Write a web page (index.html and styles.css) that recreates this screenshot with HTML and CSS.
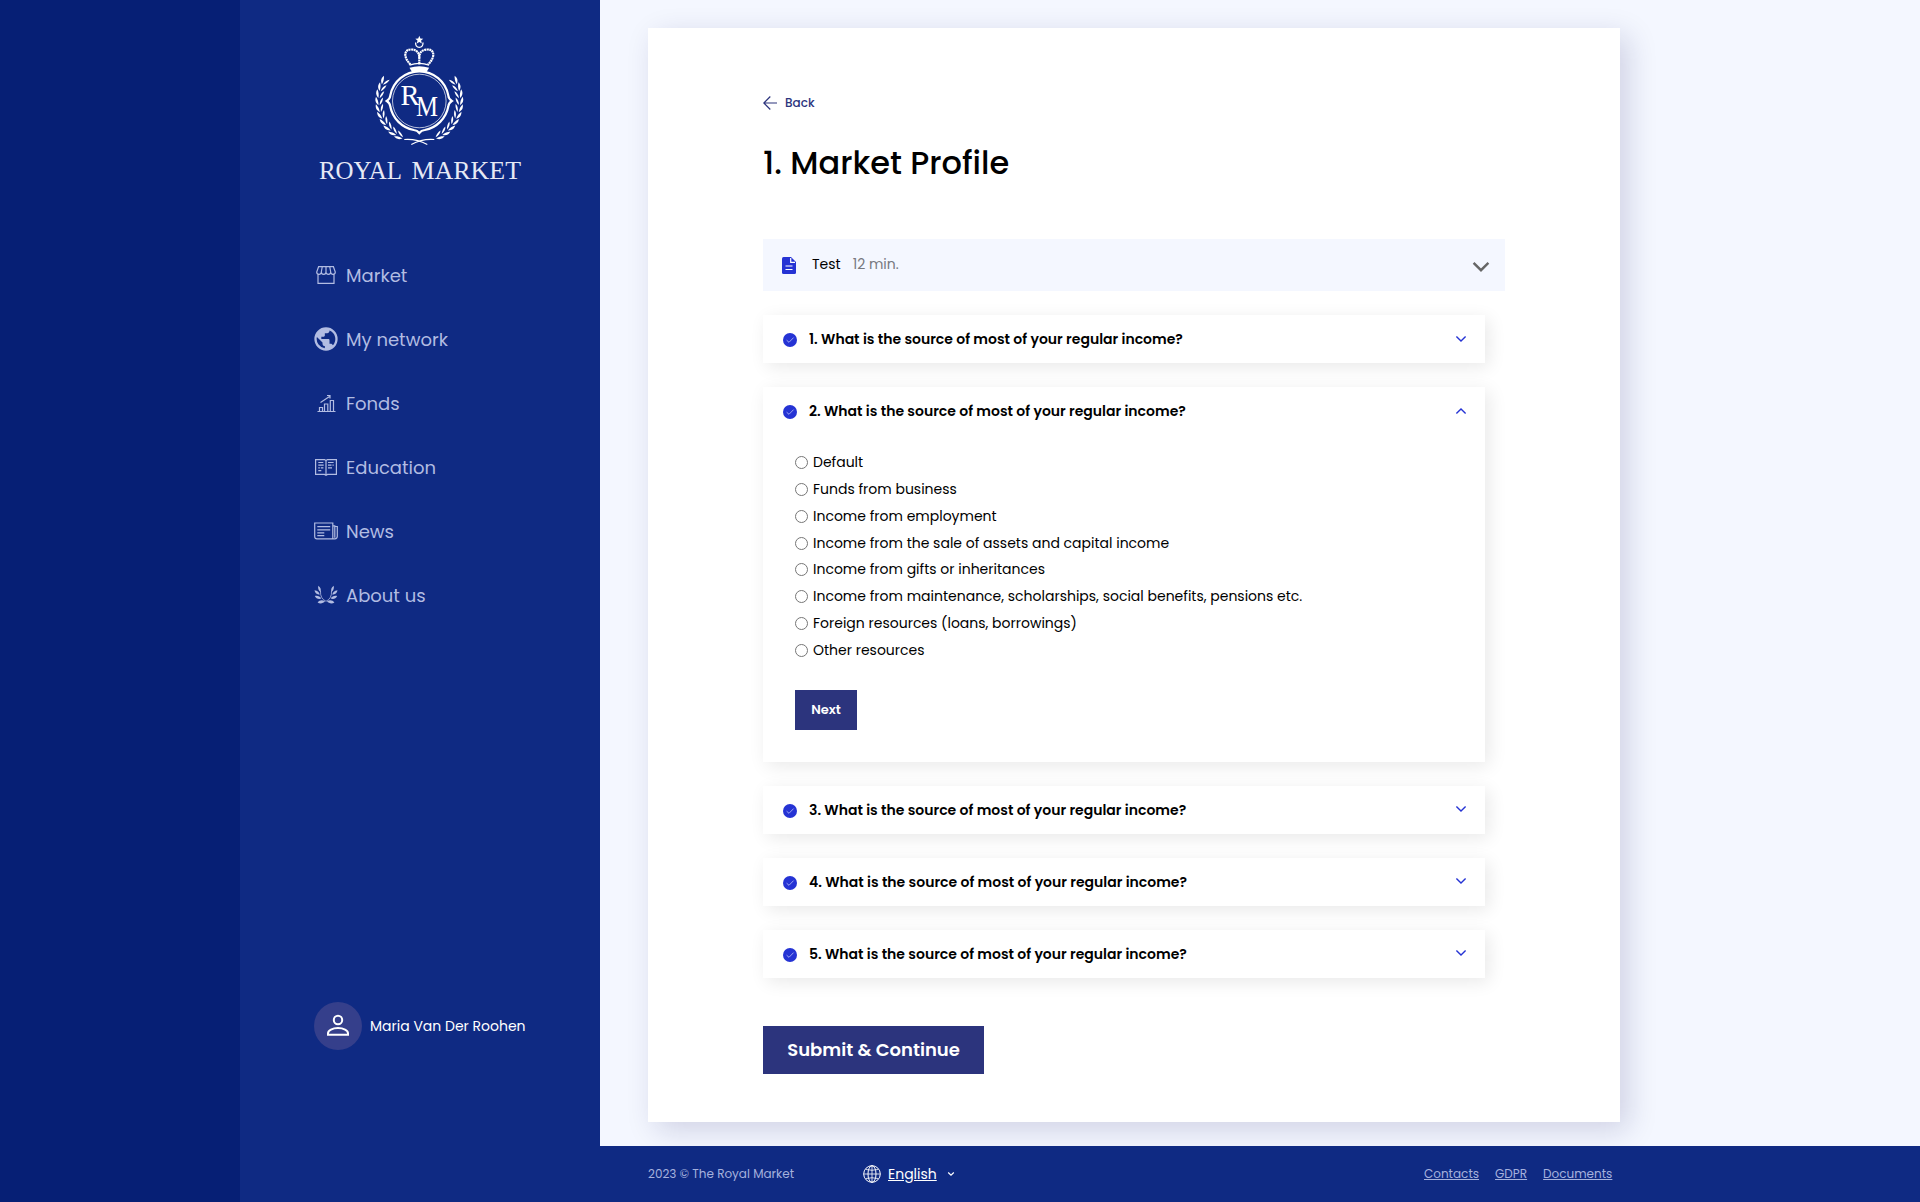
FILE: index.html
```html
<!DOCTYPE html>
<html lang="en">
<head>
<meta charset="utf-8">
<title>Royal Market</title>
<link rel="stylesheet" href="styles.css">
</head>
<body>
<svg class="sprite" width="0" height="0" aria-hidden="true">
  <symbol id="check" viewBox="0 0 14 14"><circle cx="7" cy="7" r="7" fill="#2533d4"/><path d="M3.600 7.200 6 9.300 10.600 4.600" fill="none" stroke="#aab0f5" stroke-width=".9"/></symbol>
  <symbol id="chevron" viewBox="0 0 12 8"><path d="M1.400 1.600 6 6.100l4.600-4.500" fill="none" stroke="currentColor" stroke-width="1.400"/></symbol>
</svg>
<div class="page">
  <div class="edge"></div>
  <aside class="sidebar">
    <svg class="logo" width="240" height="170" viewBox="300 20 240 170" fill="#fff">
      <defs>
        <g id="pair"><path d="M-41 2C-44.500-1-44.200-4-43-6.500-41.500-4-40.600-1-41 2z"/><path d="M-39.800 2C-39.600-1.500-38.500-4-36-5.500-36.300-2.500-37.500 0-39.800 2z"/></g>
        <g id="branch">
          <use href="#pair" transform="rotate(27)"/><use href="#pair" transform="rotate(17)"/><use href="#pair" transform="rotate(7)"/><use href="#pair" transform="rotate(-3)"/><use href="#pair" transform="rotate(-13)"/><use href="#pair" transform="rotate(-23)"/><use href="#pair" transform="rotate(-33)"/><use href="#pair" transform="rotate(-43)"/><use href="#pair" transform="rotate(-53)"/><use href="#pair" transform="rotate(-63)"/>
          <path d="M-15 38.500Q-3 37.500 8 43.500" fill="none" stroke="#fff" stroke-width="1.200"/>
        </g>
      </defs>
      <path d="m419.300 35.800 1.100 2.700 2.900.2-2.200 1.900.7 2.800-2.500-1.500-2.500 1.500.7-2.800-2.200-1.900 2.900-.2z"/>
      <path d="M415.800 42.500a3.700 3.700 0 1 0 7 0" fill="none" stroke="#fff" stroke-width="1.300"/>
      <g fill="none" stroke="#fff" stroke-width="2.200" stroke-dasharray="2 .5"><path d="M410.500 64.500C403 57 404 49.500 411 49.500c5 0 8.300 2.500 8.300 8 0-5.500 3.300-8 8.300-8 7 0 8 7.500.5 15"/><path d="M419.300 57v8"/></g>
      <path d="M409.500 65.200q9.800-3.500 19.600 0" fill="none" stroke="#fff" stroke-width="1.300"/>
      <path d="M409.500 67.800q9.800-3 19.600 0l-2.500 4.200h-14.600z"/>
      <g transform="translate(419.300 101)">
        <use href="#branch"/><use href="#branch" transform="scale(-1 1)"/>
        <g fill="none" stroke="#fff">
          <path stroke-width="2.200" d="M-29-5.500A29.500 29.500 0 0 1 29-5.500Q29.300-2 32.500 0 29.300 2 29 5.500A29.500 29.500 0 0 1 5.500 29Q2 29.300 0 32-2 29.300-5.500 29A29.500 29.500 0 0 1-29 5.500Q-29.300 2-32.500 0-29.300-2-29-5.500z"/>
          <circle r="26.800" stroke-width=".7"/>
        </g>
      </g>
      <text class="mono" x="400.500" y="105" textLength="19" lengthAdjust="spacingAndGlyphs">R</text><text class="mono" x="416" y="116" textLength="22" lengthAdjust="spacingAndGlyphs">M</text>
      <text class="brand" x="319" y="178.500" textLength="83" lengthAdjust="spacingAndGlyphs">ROYAL</text>
      <text class="brand" x="411.500" y="178.500" textLength="109.500" lengthAdjust="spacingAndGlyphs">MARKET</text>
    </svg>
    <nav class="nav">
      <a class="nav-item"><svg width="24" height="24" viewBox="0 0 24 24" fill="none" stroke="currentColor" stroke-width="1.200"><path d="M4 11v9.400h16V11M4.600 3.700h14.800L21.300 9c0 3-4.600 3.200-4.600 0 0 3.200-4.700 3.200-4.700 0 0 3.200-4.700 3.200-4.700 0 0 3.200-4.600 3-4.600 0zM7.300 9l.9-5M12 9V4M16.700 9l-.9-5"/></svg>Market</a>
      <a class="nav-item"><svg width="24" height="24" viewBox="1.700 1.700 20.600 20.600" fill="currentColor"><path fill-rule="evenodd" d="M12 2a10 10 0 1 0 0 20 10 10 0 0 0 0-20zm3 2.600V5c0 1.100-.9 2-2 2h-2v2c0 .55-.45 1-1 1H8v2h6c.55 0 1 .45 1 1v3h1c.9 0 1.640.58 1.900 1.390A8 8 0 0 0 15 4.600zM4.210 10.210A8 8 0 0 0 11 19.930V18c-1.100 0-2-.9-2-2v-1z"/></svg>My network</a>
      <a class="nav-item"><svg width="24" height="24" viewBox="0 0 24 24" fill="none" stroke="currentColor" stroke-width="1.200"><path d="M3.500 20.500h18M5.500 20v-3.500h3V20M10.500 20v-7h3.300v7M16.300 20V9.500h3.200V20M6.500 11.500l9-6M13 4.500h3v3"/></svg>Fonds</a>
      <a class="nav-item"><svg width="24" height="24" viewBox="0 0 24 24" fill="none" stroke="currentColor" stroke-width="1.200"><path d="M1.600 4.600h8.900l1.500 1 1.500-1h8.900v14.800h-8.900l-1.500 1-1.500-1H1.600zM12 5.500v14M4.300 7.500h5M4.300 10.200h5.400M4.300 12.900h1.500m1 0h2.600M4.300 15.700h3M14 7.500h5.600M14 10.200h3.500m1 0h1.200M14 12.900h4"/></svg>Education</a>
      <a class="nav-item"><svg width="24" height="24" viewBox="0 0 24 24" fill="none" stroke="currentColor" stroke-width="1.200"><path d="M.7 4h18.100v15.800H3q-2.300 0-2.300-2.300zM18.800 6.800h2v12M21 7.500h2.300v9.800q0 2.500-2.500 2.500h-2M3.300 7.700h12.900M3.300 10.800h12.900M3.300 13.800h7M3.300 16.600h7"/></svg>News</a>
      <a class="nav-item"><svg width="24" height="24" viewBox="0 0 24 24" fill="currentColor"><defs><g id="wing"><path d="M4.300 2.700c2.600 2 3 4 2.200 6.300C4.500 7.500 3.700 5 4.300 2.700zM.5 7.200c3.200.5 4.800 2 5.200 4.600C2.900 11.500.8 9.700.5 7.200zM.8 13c2.800-.6 5 .2 6.600 2.600C4.500 16.700 2 15.500.8 13zM3.600 19.500c1.800-2.400 4.600-2.900 7.400-1.200-1.800 2.200-5 2.800-7.400 1.200z"/><path d="M6.500 8q-.5 7.500 5.500 10.300" fill="none" stroke="currentColor" stroke-width=".8"/></g></defs><use href="#wing"/><use href="#wing" transform="matrix(-1 0 0 1 24 0)"/></svg>About us</a>
    </nav>
    <div class="user">
      <span class="avatar"><svg width="24" height="24" viewBox="0 0 24 24" fill="none" stroke="#fff" stroke-width="2"><circle cx="12" cy="6" r="4.200"/><path d="M2 20.800v-1.500C2 16.500 6.500 14 12 14s10 2.500 10 5.300v1.500z"/></svg></span>
      <span class="user-name">Maria Van Der Roohen</span>
    </div>
  </aside>
  <div class="main">
    <main class="sheet">
      <a class="back"><svg width="14" height="14" viewBox="0 0 14 14" fill="none" stroke="currentColor" stroke-width="1.200"><path d="M14 7H.8M7.300.5.8 7l6.500 6.500"/></svg><span>Back</span></a>
      <h1 class="title">1. Market Profile</h1>
      <div class="test">
        <svg width="14" height="17" viewBox="0 0 14 17"><path d="M1.500 0H9l5 5v10.500q0 1.500-1.500 1.500h-11Q0 17 0 15.500v-14Q0 0 1.500 0z" fill="#2533d4"/><path d="M8.700 1v4.300H13M3.500 9h7M3.500 12.500h7" fill="none" stroke="#fff" stroke-width="1.200"/></svg>
        <span class="test-name">Test</span><span class="test-time">12 min.</span>
        <svg class="test-chevron" width="18" height="12" viewBox="0 0 18 12"><path d="m1.600 1.800 7.400 7.400 7.400-7.400" fill="none" stroke="#666" stroke-width="2.400"/></svg>
      </div>
      <section class="question"><header class="q-head"><svg class="done" width="14" height="14"><use href="#check"/></svg><h2 class="q-title">1. What is the source of most of your regular income?</h2><svg class="toggle" width="12" height="8"><use href="#chevron"/></svg></header></section>
      <section class="question expanded">
        <header class="q-head"><svg class="done" width="14" height="14"><use href="#check"/></svg><h2 class="q-title">2. What is the source of most of your regular income?</h2><svg class="toggle open" width="12" height="8"><use href="#chevron"/></svg></header>
        <div class="answers">
          <label class="option"><input type="radio" name="q2">Default</label>
          <label class="option"><input type="radio" name="q2">Funds from business</label>
          <label class="option"><input type="radio" name="q2">Income from employment</label>
          <label class="option"><input type="radio" name="q2">Income from the sale of assets and capital income</label>
          <label class="option"><input type="radio" name="q2">Income from gifts or inheritances</label>
          <label class="option"><input type="radio" name="q2">Income from maintenance, scholarships, social benefits, pensions etc.</label>
          <label class="option"><input type="radio" name="q2">Foreign resources (loans, borrowings)</label>
          <label class="option"><input type="radio" name="q2">Other resources</label>
          <button class="next">Next</button>
        </div>
      </section>
      <section class="question"><header class="q-head"><svg class="done" width="14" height="14"><use href="#check"/></svg><h2 class="q-title">3. What is the source of most of your regular income?</h2><svg class="toggle" width="12" height="8"><use href="#chevron"/></svg></header></section>
      <section class="question"><header class="q-head"><svg class="done" width="14" height="14"><use href="#check"/></svg><h2 class="q-title">4. What is the source of most of your regular income?</h2><svg class="toggle" width="12" height="8"><use href="#chevron"/></svg></header></section>
      <section class="question"><header class="q-head"><svg class="done" width="14" height="14"><use href="#check"/></svg><h2 class="q-title">5. What is the source of most of your regular income?</h2><svg class="toggle" width="12" height="8"><use href="#chevron"/></svg></header></section>
      <button class="submit">Submit &amp; Continue</button>
    </main>
    <footer class="footer">
      <span class="copy">2023 © The Royal Market</span>
      <span class="lang"><svg width="18" height="18" viewBox="0 0 18 18" fill="none" stroke="#fff"><circle cx="9" cy="9" r="8.300"/><ellipse cx="9" cy="9" rx="4" ry="8.300"/><path d="M9 .7v16.600M.7 9h16.600M3 4.500q6 1.500 12 0M3 13.500q6-1.500 12 0" stroke-width=".8"/></svg><a>English</a><svg width="8" height="6" viewBox="0 0 8 6" fill="none" stroke="#fff" stroke-width="1.200"><path d="m1.200 1.500 2.800 2.700 2.800-2.700"/></svg></span>
      <span class="links"><a>Contacts</a><a>GDPR</a><a>Documents</a></span>
    </footer>
  </div>
</div>
</body>
</html>
```
FILE: styles.css
```css
* { box-sizing: border-box; }
body { margin: 0; font-family: Poppins, Inter, sans-serif; font-size: 14px; color: #000; background: #f4f7ff; }
button { border: 0; font-family: inherit; color: #fff; background: #2c347d; }
.sprite { display: block; position: absolute; }
.page { display: grid; grid-template-columns: 240px 360px 1fr; height: 1202px; overflow: hidden; }
.edge { background: #061f75; }
.sidebar { display: flex; flex-direction: column; background: #0f2a83; padding: 20px 60px 152px; }
.logo { display: block; flex: none; }
.mono { font: 29px "Liberation Serif", serif; }
.brand { font: 24.500px "Liberation Serif", serif; fill: #e6e9f5; }
.nav { display: flex; flex-direction: column; padding: 53px 0 0 14px; }
.nav-item { display: flex; align-items: center; gap: 8px; height: 64px; font-size: 18px; color: #b2bce2; }
.user { display: flex; align-items: center; gap: 8px; margin: auto 0 0 14px; color: #fff; white-space: nowrap; }
.avatar { display: grid; place-items: center; width: 48px; height: 48px; border-radius: 50%; background: #353f8b; }
.main { display: flex; flex-direction: column; min-width: 0; }
.sheet { width: 972px; height: 1094px; margin: 28px 0 24px 48px; padding: 67px 115px 48px; background: #fff; box-shadow: 8px 8px 28px rgba(20, 20, 90, .16); display: flex; flex-direction: column; align-items: flex-start; flex: none; }
.back { display: flex; align-items: center; gap: 8px; height: 16px; font-size: 12px; font-weight: 500; color: #2c347d; }
.title { margin: 32px 0 0; height: 40px; line-height: 40px; font-size: 32px; font-weight: 500; }
.test { display: flex; align-items: center; align-self: stretch; height: 52px; margin-top: 56px; padding: 0 15px 0 19px; background: #f4f7ff; }
.test-name { margin: 0 12px 2px 16px; }
.test-time { margin-bottom: 2px; color: #77797f; }
.test-chevron { margin: 3px 0 0 auto; }
.question { width: 722px; margin-top: 24px; background: #fff; box-shadow: 4px 4px 18px rgba(0, 0, 0, .09); }
.q-head { display: flex; align-items: center; height: 48px; padding: 0 18px 0 20px; }
.done { margin-top: 2px; }
.q-title { margin: 0 auto 0 12px; font-size: 14px; font-weight: 600; }
.toggle { color: #2533d4; }
.expanded ~ .question .toggle { margin-bottom: 2px; }
.open { transform: rotate(180deg); }
.answers { display: flex; flex-direction: column; align-items: flex-start; padding: 14px 32px 32.300px; }
.option { display: flex; align-items: center; gap: 5px; height: 26.860px; }
.option input { width: 13px; height: 13px; margin: 0; }
.next { width: 62px; height: 40px; margin-top: 26px; padding: 0; font-size: 13px; font-weight: 600; }
.submit { width: 221px; height: 48px; margin-top: 47.800px; padding: 0; font-size: 18px; font-weight: 600; }
.footer { display: flex; align-items: center; flex: none; height: 56px; padding-left: 48px; background: #0f2a83; color: #a5b1dd; font-size: 12px; }
.footer a { text-decoration: underline; }
.copy { width: 215px; }
.lang { display: flex; align-items: center; width: 561px; color: #fff; font-size: 14px; }
.lang a { margin: 0 10px 0 7px; }
.links { display: flex; gap: 16px; }
```
